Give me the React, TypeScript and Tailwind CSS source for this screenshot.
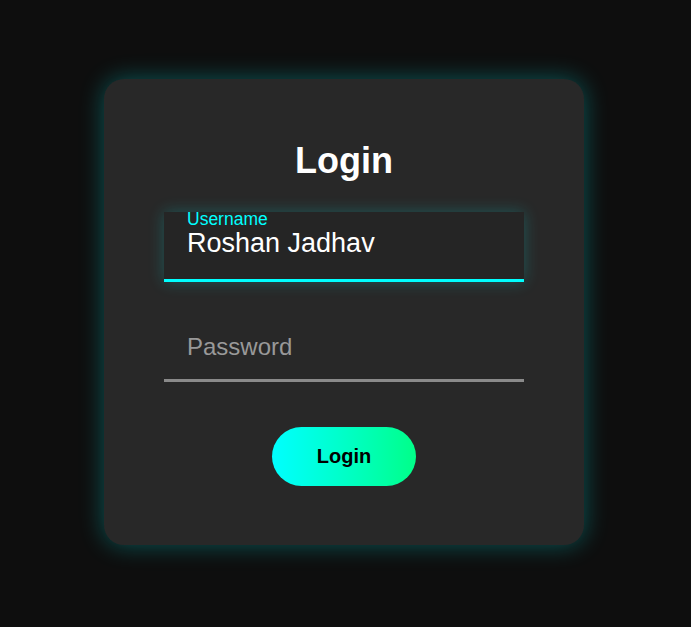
import React from "react";

export default function App() {
  return (
    <div
      className="w-[691px] h-[627px] bg-[#0e0e0e] flex items-start justify-start pl-[104px] pt-[79px]"
      style={{ fontFamily: '"Liberation Sans", Arial, sans-serif' }}
    >
      <div className="w-[480px] h-[466px] bg-[#282828] rounded-[20px] shadow-[0_0_24px_rgba(0,255,255,0.3)] px-[60px] pt-[61px] flex flex-col">
        <h1 className="text-[36px] leading-[41px] font-bold text-white text-center">Login</h1>
        <div className="mt-[31px] h-[70px] bg-[#252525] border-b-[3px] border-[#00ffff] shadow-[0_0_15px_rgba(0,255,255,0.22)] pl-[23px] flex flex-col">
          <span className="text-[17.5px] leading-[20px] text-[#00ffff] -mt-[3px]">Username</span>
          <span className="text-[27px] leading-[30px] text-white -mt-[1px]">Roshan Jadhav</span>
        </div>
        <div className="mt-[30px] h-[70px] border-b-[3px] border-[#8a8a8a] pl-[23px] flex items-center">
          <span className="text-[24px] leading-[28px] text-[#999999] mt-[2px]">Password</span>
        </div>
        <div className="mt-[45px] flex justify-center">
          <button className="w-[144px] h-[59px] rounded-full bg-gradient-to-r from-[#00ffff] to-[#00ff88] text-black font-bold text-[20px] pb-[1px]">
            Login
          </button>
        </div>
      </div>
    </div>
  );
}
